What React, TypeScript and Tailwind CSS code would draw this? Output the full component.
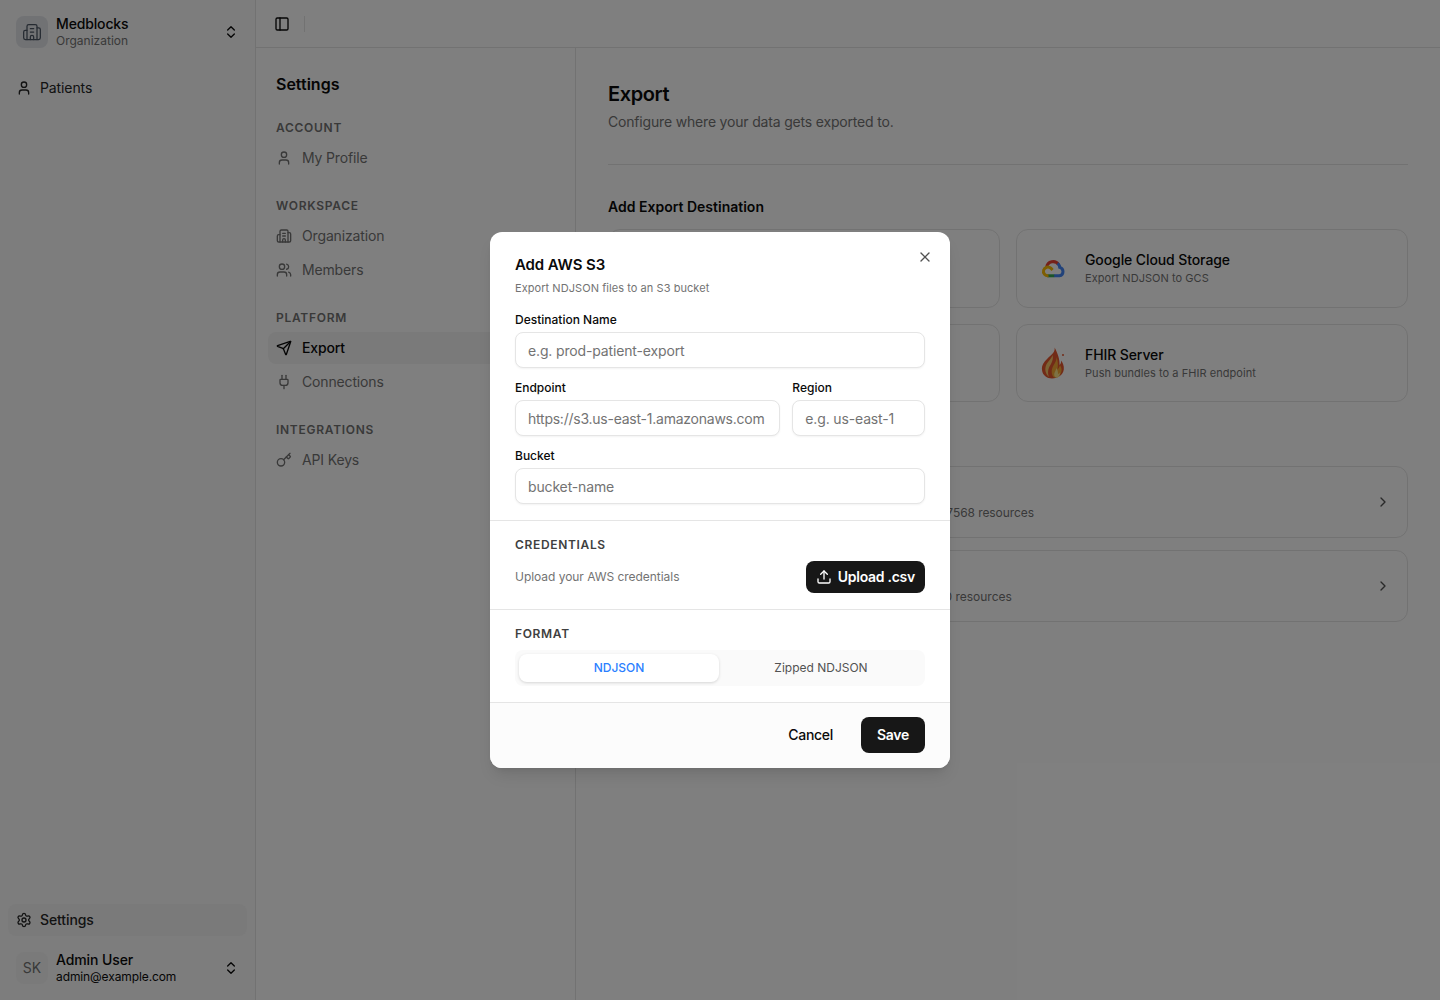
import { Building2, ChevronRight, ChevronsUpDown, Key, PanelLeft, Plug, Send, Settings, Upload, User, Users, X } from "lucide-react";
import type { ReactNode } from "react";

function GcpLogo() {
  return (
    <svg width="24" height="24" viewBox="0 0 24 24" fill="none" strokeWidth="3">
      <path d="M5.6 11.2A6.6 6.6 0 0 1 17.6 8.6" stroke="#ea4335" />
      <path d="M16.6 7.4C18 8.6 18.6 9.9 18.7 11.4A4.3 4.3 0 0 1 18.5 19.8H13" stroke="#4285f4" />
      <path d="M13.2 19.8H6.4" stroke="#34a853" />
      <path d="M7.5 19.8A4.4 4.4 0 1 1 9.8 12.2L11.6 14" stroke="#fbbc05" />
    </svg>
  );
}

function FlameLogo() {
  return (
    <svg width="24" height="32" viewBox="0 0 24 32" fill="none">
      <path d="M13.6 0.5C14.5 5 10.5 7.5 6.5 11.5C2.5 15.5 0.5 18.5 1 23C1.6 28.5 6 31.5 11 31.5C17 31.5 22 28 22.8 22.5C23.3 18.5 21.5 15.5 20.2 13.5C20.2 15.5 19.6 17 18.5 18C19 13 16.5 5.5 13.6 0.5Z" fill="#e4572e" />
      <path d="M11.5 8C10.5 12 6.5 14.5 5 18.5C3.5 22.5 4.5 27 8 30C5.8 24.5 8 20 10 17C11.5 14 12.5 11 11.5 8Z" fill="#f6c66b" />
      <path d="M15.5 10C15.8 14 13 17 11.5 20.5C10 24 10.5 28 13 30.5C18 30.5 21 26.5 20.5 22C20.3 20 19.5 19 18.8 18C18.5 20.5 17.5 21.5 16.5 22.5C17.2 18 17 14 15.5 10Z" fill="#f7a934" />
      <path d="M15.5 21C14.8 24 13 25.5 13.2 28C13.4 30 15 31 16 30.8C18.5 30 19.5 27.5 18.5 25.5C18 26.5 17.5 27 17 27C17.2 25 16.5 23 15.5 21Z" fill="#fde58a" />
      <circle cx="22" cy="8" r="1" fill="#e4572e" />
    </svg>
  );
}

function NavItem({ icon, label, active }: { icon: ReactNode; label: string; active?: boolean }) {
  return (
    <div className={`flex h-8 items-center gap-[10px] rounded-lg px-2 text-sm tracking-[-0.15px] ${active ? "bg-[#f5f5f5] font-medium text-[#0a0a0a]" : "text-[#737373]"}`}>
      <span className="flex w-4 justify-center">{icon}</span>
      <span>{label}</span>
    </div>
  );
}

function NavGroup({ title, children }: { title: string; children: ReactNode }) {
  return (
    <div className="mt-[24px]">
      <div className="flex h-[16px] items-center px-2 text-xs font-semibold tracking-[0.06em] text-[#737373]">{title}</div>
      <div className="mt-[6px] flex flex-col gap-[2px]">{children}</div>
    </div>
  );
}

function DestCard({ logo, title, sub }: { logo: ReactNode; title: string; sub: string }) {
  return (
    <div className="flex h-[78.5px] items-center gap-5 rounded-xl border border-[#e5e5e5] pl-6">
      <span className="flex w-6 justify-center">{logo}</span>
      <div>
        <div className="text-sm leading-5 font-medium tracking-[-0.1px] text-[#0a0a0a]">{title}</div>
        <div className="text-[11px] leading-4 tracking-[0.05px] text-[#737373]">{sub}</div>
      </div>
    </div>
  );
}

function ExportRow({ title, sub, tight }: { title: string; sub: string; tight?: boolean }) {
  return (
    <div className="flex h-[72px] items-center justify-between rounded-xl border border-[#e5e5e5] pr-4 pl-6">
      <div>
        <div className="text-sm leading-5 font-medium text-[#0a0a0a]">{title}</div>
        <div className={`mt-[2px] text-xs leading-4 text-[#737373] ${tight ? "tracking-[-0.07px]" : "tracking-[-0.015px]"}`}>{sub}</div>
      </div>
      <ChevronRight size={16} className="text-[#525252]" />
    </div>
  );
}

function Field({ label, placeholder, tight }: { label: string; placeholder: string; tight?: boolean }) {
  return (
    <label className="block min-w-0">
      <span className="block h-[16px] text-xs leading-4 font-medium text-[#0a0a0a]">{label}</span>
      <input
        readOnly
        placeholder={placeholder}
        className={`mt-[4px] block h-9 w-full rounded-lg border border-[#e5e5e5] bg-white px-3 text-sm text-[#0a0a0a] shadow-[0_1px_2px_rgba(0,0,0,0.05)] outline-none placeholder:text-[#737373] ${tight ? "tracking-[-0.24px]" : "tracking-[-0.15px]"}`}
      />
    </label>
  );
}

export default function App() {
  return (
    <div className="relative flex h-screen w-full overflow-hidden bg-white [font-family:Inter,sans-serif]">
      <aside className="flex w-[256px] shrink-0 flex-col border-r border-[#e5e5e5] bg-[#fafafa]">
        <div className="flex h-[64px] items-center gap-2 px-4">
          <div className="flex h-8 w-8 items-center justify-center rounded-lg bg-[#e2e4e9] text-[#4b5563]">
            <Building2 size={20} strokeWidth={1.5} />
          </div>
          <div className="min-w-0 flex-1 pb-[2px]">
            <div className="text-sm leading-[18px] font-medium tracking-[-0.15px] text-[#0a0a0a]">Medblocks</div>
            <div className="text-xs leading-[15px] text-[#737373]">Organization</div>
          </div>
          <ChevronsUpDown size={16} className="text-[#0a0a0a]" />
        </div>
        <div className="mt-2 px-2">
          <div className="flex h-8 items-center gap-2 rounded-lg px-2 text-sm tracking-[-0.1px] text-[#262626]">
            <User size={16} />
            <span>Patients</span>
          </div>
        </div>
        <div className="mt-auto px-2 pb-2">
          <div className="flex h-8 items-center gap-2 rounded-lg bg-[#f5f5f5] px-2 text-sm font-medium tracking-[-0.1px] text-[#262626]">
            <Settings size={16} />
            <span>Settings</span>
          </div>
          <div className="mt-2 flex h-12 items-center gap-2 px-2">
            <div className="flex h-8 w-8 items-center justify-center rounded-lg bg-[#f5f5f5] text-sm text-[#737373]">SK</div>
            <div className="min-w-0 flex-1 pb-[2px]">
              <div className="text-sm leading-[18px] font-medium tracking-[-0.1px] text-[#0a0a0a]">Admin User</div>
              <div className="text-xs leading-[15px] tracking-[-0.1px] text-[#0a0a0a]">admin@example.com</div>
            </div>
            <ChevronsUpDown size={16} className="text-[#0a0a0a]" />
          </div>
        </div>
      </aside>

      <div className="flex min-w-0 flex-1 flex-col">
        <header className="flex h-[48px] shrink-0 items-center border-b border-[#e5e5e5] pl-[18px]">
          <PanelLeft size={16} className="text-[#0a0a0a]" />
          <div className="ml-[14px] h-4 w-px bg-[#e5e5e5]" />
        </header>
        <div className="flex min-h-0 flex-1">
          <nav className="w-[320px] shrink-0 border-r border-[#e5e5e5] px-3 pt-[26px]">
            <div className="px-2 pb-[2px] text-base leading-5 font-semibold text-[#0a0a0a]">Settings</div>
            <NavGroup title="ACCOUNT">
              <NavItem icon={<User size={16} />} label="My Profile" />
            </NavGroup>
            <NavGroup title="WORKSPACE">
              <NavItem icon={<Building2 size={16} />} label="Organization" />
              <NavItem icon={<Users size={16} />} label="Members" />
            </NavGroup>
            <NavGroup title="PLATFORM">
              <NavItem icon={<Send size={16} />} label="Export" active />
              <NavItem icon={<Plug size={16} />} label="Connections" />
            </NavGroup>
            <NavGroup title="INTEGRATIONS">
              <NavItem icon={<Key size={16} />} label="API Keys" />
            </NavGroup>
          </nav>
          <main className="min-w-0 flex-1 px-8 pt-8">
            <h1 className="text-xl leading-7 font-semibold tracking-[-0.4px] text-[#0a0a0a]">Export</h1>
            <p className="mt-[4px] text-sm leading-5 tracking-[-0.18px] text-[#737373]">Configure where your data gets exported to.</p>
            <div className="mt-[32px] h-px bg-[#e5e5e5]" />
            <h2 className="mt-[32px] text-sm leading-5 font-semibold text-[#0a0a0a]">Add Export Destination</h2>
            <div className="mt-[12px] grid grid-cols-2 gap-4">
              <DestCard logo={<span className="h-6 w-6 rounded bg-[#ff9900]" />} title="Amazon S3" sub="Export NDJSON to S3" />
              <DestCard logo={<GcpLogo />} title="Google Cloud Storage" sub="Export NDJSON to GCS" />
              <DestCard logo={<span className="h-6 w-6 rounded bg-[#0078d4]" />} title="Azure Blob Storage" sub="Export NDJSON to Azure" />
              <DestCard logo={<FlameLogo />} title="FHIR Server" sub="Push bundles to a FHIR endpoint" />
            </div>
            <h2 className="mt-[32px] h-[32px] text-sm leading-5 font-semibold text-[#0a0a0a]">Export Destinations</h2>
            <div className="flex flex-col gap-3">
              <ExportRow title="prod-patient-export" sub="Last exported 2 hours ago to your destination bucket · 37568 resources" tight />
              <ExportRow title="staging-export" sub="Last exported 3 days ago to your storage bucket · 12090 resources" />
            </div>
          </main>
        </div>
      </div>

      <div className="absolute inset-0 flex items-center justify-center bg-black/50">
        <div className="w-[460px] overflow-hidden rounded-xl bg-white shadow-lg">
          <div className="relative px-[25px] pt-[23px]">
            <h3 className="text-[15px] leading-[20px] font-semibold tracking-[-0.1px] text-[#0a0a0a]">Add AWS S3</h3>
            <p className="mt-[5px] text-[11px] leading-4 tracking-[0.06px] text-[#737373]">Export NDJSON files to an S3 bucket</p>
            <X size={16} className="absolute top-[17px] right-[17px] text-[#525252]" />
          </div>
          <div className="flex flex-col gap-3 px-[25px] pt-[16px] pb-4">
            <Field label="Destination Name" placeholder="e.g. prod-patient-export" />
            <div className="grid grid-cols-[2fr_1fr] gap-3">
              <Field label="Endpoint" placeholder="https://s3.us-east-1.amazonaws.com" tight />
              <Field label="Region" placeholder="e.g. us-east-1" />
            </div>
            <Field label="Bucket" placeholder="bucket-name" />
          </div>
          <div className="border-t border-[#e5e5e5] px-[25px] pt-[16px] pb-4">
            <div className="text-xs leading-4 font-semibold tracking-[0.055em] text-[#404040]">CREDENTIALS</div>
            <div className="mt-[8px] flex items-center justify-between">
              <span className="text-xs tracking-[-0.04px] text-[#737373]">Upload your AWS credentials</span>
              <button className="flex h-8 items-center gap-[6px] rounded-lg bg-[#171717] pr-[10px] pl-[10px] text-sm font-semibold tracking-[-0.27px] text-white">
                <Upload size={16} />
                Upload .csv
              </button>
            </div>
          </div>
          <div className="border-t border-[#e5e5e5] px-[25px] pt-[16px] pb-4">
            <div className="text-xs leading-4 font-semibold tracking-[0.055em] text-[#404040]">FORMAT</div>
            <div className="mt-[8px] flex h-9 items-center gap-[2px] rounded-lg bg-[#fafafa] px-1">
              <div className="flex h-7 w-[200px] items-center justify-center rounded-lg bg-white text-xs font-medium text-[#2b7fff] shadow-[0_1px_3px_rgba(0,0,0,0.15)]">NDJSON</div>
              <div className="flex h-7 flex-1 items-center justify-center text-xs text-[#525252]">Zipped NDJSON</div>
            </div>
          </div>
          <div className="flex h-[66px] items-center justify-end gap-7 border-t border-[#e5e5e5] bg-[#fcfcfc] px-[25px] pb-[1px]">
            <span className="text-sm font-medium tracking-[-0.3px] text-[#0a0a0a]">Cancel</span>
            <button className="h-9 w-16 rounded-lg bg-[#171717] text-sm font-semibold tracking-[-0.3px] text-white">Save</button>
          </div>
        </div>
      </div>
    </div>
  );
}
